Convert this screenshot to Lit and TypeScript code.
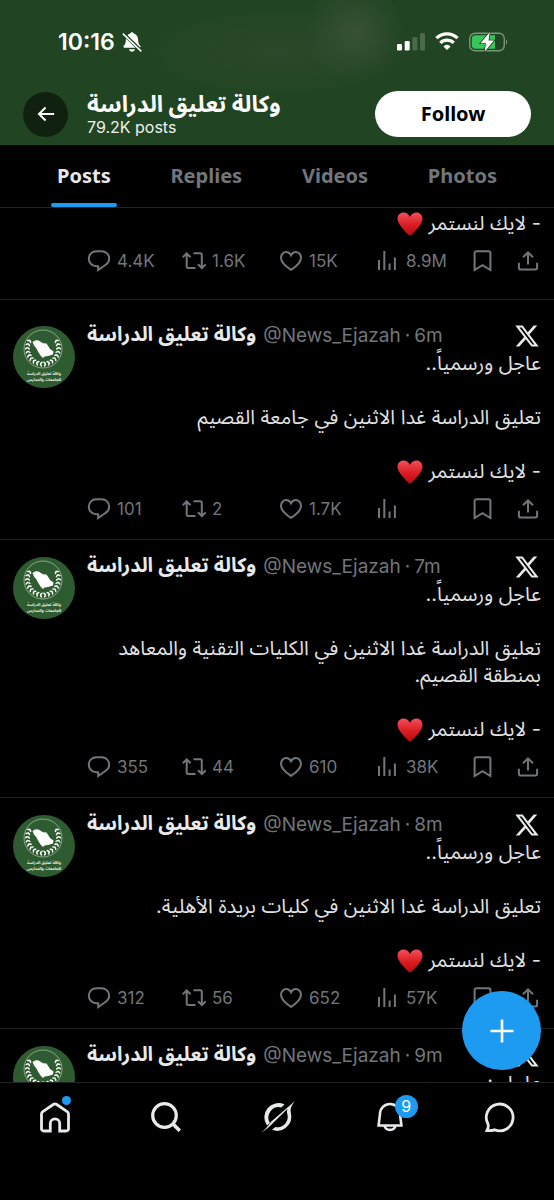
import { LitElement, html, css, svg, nothing } from "lit";
import { customElement, property } from "lit/decorators.js";

const NAME = "وكالة تعليق الدراسة";

const heart = html`<svg class="heart" viewBox="0 0 26 24" role="img" aria-label="♥">
  <defs>
    <linearGradient id="hg" x1="0" y1="0" x2="0" y2="1">
      <stop offset="0" stop-color="#f2505a" />
      <stop offset=".5" stop-color="#dc1f26" />
      <stop offset="1" stop-color="#b80a0d" />
    </linearGradient>
  </defs>
  <path
    fill="url(#hg)"
    d="M13 23.6C11.6 23.2 7.600 19 4.600 15.200C2 12 .5 9.500 .5 6.700C.5 3.100 3.200 .6 6.600 .6C9.300 .6 11.800 2.300 13 5C14.200 2.300 16.700 .6 19.400 .6C22.800 .6 25.500 3.100 25.500 6.700C25.500 9.500 24 12 21.400 15.200C18.400 19 14.400 23.200 13 23.600Z"
  />
</svg>`;

const icons = {
  reply: svg`<path d="M9.500 2.200h5C19 2.200 22.200 5.600 22.200 9.600c0 3-1.600 5.200-4.200 6.700l-6.800 4.700v-3.800H9.500C5 17.200 1.800 13.900 1.800 9.700S5 2.200 9.500 2.200Z"/>`,
  repost: svg`<path d="M.8 8.200 4.700 4.400l3.900 3.800M4.700 4.800V17.500a1.500 1.500 0 0 0 1.500 1.500H13.500M11.500 4.300H18.300a1.500 1.500 0 0 1 1.500 1.500V18.800M16 15.300l3.900 3.800 3.900-3.800"/>`,
  like: svg`<path d="M12 20.900C6.500 17.400 2 13.400 2 8.800c0-3.200 2.300-5.700 5.200-5.700 2 0 3.700 1.100 4.800 3.200 1.100-2.100 2.800-3.200 4.800-3.200 2.900 0 5.200 2.500 5.200 5.700 0 4.600-4.500 8.600-10 12.100Z"/>`,
  views: svg`<path d="M3 11v10M8.300 2v19M13.600 14.500v6.500M18.900 8.500v12.500"/>`,
  bookmark: svg`<path d="M3.600 4a1.800 1.800 0 0 1 1.800-1.800h12.200A1.800 1.800 0 0 1 19.400 4v17L11.500 16.200 3.600 21Z"/>`,
  share: svg`<path d="M11 15.500V3.500M6 8.300 11 3.300l5 5M1.900 13.800v4.900a1.800 1.800 0 0 0 1.800 1.800h14.600a1.800 1.800 0 0 0 1.800-1.800v-4.900"/>`,
};

const branch = [0, 1, 2, 3, 4, 5, 6, 7, 8];

@customElement("agency-avatar")
class AgencyAvatar extends LitElement {
  static styles = css`
    :host { display: block; }
    .pic { display: block; width: 100%; }
    .caption { font: 700 4px "Noto Sans Arabic", "DejaVu Sans", sans-serif; fill: #e9f1e7; text-anchor: middle; }
  `;

  leaf(i: number) {
    const deg = 212 - i * 14;
    const a = (deg * Math.PI) / 180;
    const x = 30 + Math.cos(a) * 15.500;
    const y = 22.500 + Math.sin(a) * 15.500;
    return svg`<g transform="translate(${x} ${y}) rotate(${deg})">
      <ellipse cx="-1.400" cy="0" rx="1.800" ry=".8" transform="rotate(38)"/>
      <ellipse cx="1.400" cy="0" rx="1.800" ry=".8" transform="rotate(-38)"/>
    </g>`;
  }

  render() {
    return html`<svg class="pic" viewBox="0 0 62 62" role="img" aria-label=${NAME}>
      <circle cx="31" cy="31" r="31" fill="#2f5b30" />
      <circle cx="30" cy="23" r="19" fill="none" stroke="#c8d8c6" stroke-width=".6" />
      <g fill="#fff">
        <g>${branch.map((i) => this.leaf(i))}</g>
        <g transform="translate(60 0) scale(-1 1)">${branch.map((i) => this.leaf(i))}</g>
        <path d="M19.500 16 22.500 14.200 25.500 14.600 30 17.200 33.500 17.400 35.500 20.500 37 23 40.500 25.500 40 28.500 35 30 31.500 30.600 30 32 27.500 29.500 25 25.500 23.500 22.500 21 19.500Z" />
      </g>
      <text class="caption" x="31" y="49">وكالة تعليق الدراسة</text>
      <text class="caption" x="31" y="55">للجامعات والمدارس</text>
    </svg>`;
  }
}

interface Post {
  age?: string;
  lines: string[];
  stats: string[];
  spaced?: boolean;
}

const OPEN = "عاجل ورسمياً..";

const posts: Post[] = [
  { lines: [], stats: ["4.4K", "1.6K", "15K", "8.9M"] },
  { age: "6m", lines: [OPEN, "", "تعليق الدراسة غدا الاثنين في جامعة القصيم", ""], stats: ["101", "2", "1.7K", ""], spaced: true },
  { age: "7m", lines: [OPEN, "", "تعليق الدراسة غدا الاثنين في الكليات التقنية والمعاهد بمنطقة القصيم.", ""], stats: ["355", "44", "610", "38K"] },
  { age: "8m", lines: [OPEN, "", "تعليق الدراسة غدا الاثنين في كليات بريدة الأهلية.", ""], stats: ["312", "56", "652", "57K"] },
  { age: "9m", lines: ["عاجل :"], stats: ["", "", "", ""] },
];

@customElement("feed-post")
class FeedPost extends LitElement {
  @property({ attribute: false }) post!: Post;

  static styles = css`
    :host { display: block; flex: none; }
    .post { display: grid; grid-template-columns: 62px minmax(0, 1fr); column-gap: 12px; padding: 14px 13px 18px; border-bottom: 1px solid #212327; }
    .spaced { padding-top: 23px; }
    .tail { padding-top: 2px; padding-bottom: 26px; }
    .avatar { margin-top: 3px; }
    .body { grid-column: 2; min-width: 0; }
    .head { display: flex; align-items: center; height: 25px; margin-bottom: 2px; white-space: nowrap; font: 19px/24px Inter, sans-serif; color: #71767b; }
    .name { margin-right: 7px; font: 700 20px/25px "Noto Sans Arabic", "DejaVu Sans", sans-serif; color: #e7e9ea; }
    .sep { margin: 0 4px; }
    .x { width: 26px; height: 26px; margin-left: auto; fill: #e7e9ea; }
    .text { margin: 0; font: 20px/27px Inter, "Noto Sans Arabic", "DejaVu Sans", sans-serif; color: #e0e1e2; }
    .line { min-height: 27px; }
    .close { display: flex; align-items: center; gap: 5px; height: 27px; }
    .heart { width: 26px; height: 24px; }
    .stats { display: grid; grid-template-columns: 95fr 97fr 97fr 95fr 46fr 24px; height: 24px; margin-top: 12px; }
    .stat { display: flex; align-items: center; gap: 6px; padding: 0; border: 0; background: none; color: #71767b; font: 17px/24px Inter, sans-serif; cursor: pointer; }
    .icon { flex: none; width: 24px; height: 24px; fill: none; stroke: currentColor; stroke-width: 2; }
  `;

  stat(icon: keyof typeof icons, label: string, value = "") {
    return html`<button class="stat" aria-label="${label} ${value}">
      <svg class="icon" viewBox="0 0 24 24">${icons[icon]}</svg>${value ? html`<span>${value}</span>` : nothing}
    </button>`;
  }

  render() {
    const { age, lines, stats, spaced } = this.post;
    return html`<article class="post ${spaced ? "spaced" : ""} ${age ? "" : "tail"}">
      ${age ? html`<agency-avatar class="avatar"></agency-avatar>` : nothing}
      <div class="body">
        ${age
          ? html`<header class="head">
              <bdi class="name">${NAME}</bdi><span>@News_Ejazah</span><span class="sep">·</span><span>${age}</span>
              <svg class="x" viewBox="1 0 24 24" aria-hidden="true">
                <path d="M18.244 2.250h3.308l-7.227 8.260 8.502 11.240H16.170l-5.214-6.817L4.990 21.750H1.680l7.730-8.835L1.254 2.250H8.080l4.713 6.231zm-1.161 17.520h1.833L7.084 4.126H5.117z" />
              </svg>
            </header>`
          : nothing}
        <div class="text" dir="rtl">
          ${lines.map((l) => html`<div class="line">${l}</div>`)}
          <div class="close"><span>- لايك لنستمر</span>${heart}</div>
        </div>
        <div class="stats">
          ${this.stat("reply", "Reply", stats[0])} ${this.stat("repost", "Repost", stats[1])}
          ${this.stat("like", "Like", stats[2])} ${this.stat("views", "Views", stats[3])}
          ${this.stat("bookmark", "Bookmark")} ${this.stat("share", "Share")}
        </div>
      </div>
    </article>`;
  }
}

@customElement("app-root")
class AppRoot extends LitElement {
  static styles = css`
    :host { display: flex; flex-direction: column; height: 100vh; background: #000; color: #e7e9ea; font-family: Inter, sans-serif; overflow: hidden; }
    .top { flex: none; background: radial-gradient(circle at 64% 22%, #375138 0, #37513800 50px), radial-gradient(ellipse at 50% 36%, #2c482a 0, #2c482a00 130px), #214522; }
    .status { display: flex; align-items: center; height: 83px; padding: 0 46px 0 58px; color: #fff; }
    .clock { font: 600 23px/28px Inter, sans-serif; }
    .mute { width: 20px; height: 22px; margin-left: 7px; }
    .signals { display: flex; align-items: center; gap: 10px; margin-left: auto; }
    .bars { width: 28px; height: 19px; }
    .wifi { width: 24px; height: 19px; }
    .battery { width: 39px; height: 20px; }
    .profile { display: flex; align-items: center; padding: 8px 23px; }
    .back { display: grid; place-items: center; width: 45px; height: 45px; padding: 0; border: 0; border-radius: 50%; background: #10220f; }
    .arrow { width: 18px; height: 18px; }
    .who { margin-left: 19px; }
    .title { margin: 0; font: 700 23px/26px Inter, "Noto Sans Arabic", "DejaVu Sans", sans-serif; color: #fff; white-space: nowrap; }
    .count { margin: 0; font: 16px/20px Inter, sans-serif; color: #eef2ee; }
    .follow { width: 156px; height: 46px; margin-left: auto; border: 0; border-radius: 23px; background: #fff; color: #000; font: 700 20px/24px "Noto Sans", sans-serif; }
    .tabs { flex: none; display: flex; justify-content: space-between; height: 62px; padding: 0 51px; border-bottom: 1px solid #212327; }
    .tab { position: relative; display: flex; align-items: center; padding: 0 6px; color: #71767b; text-decoration: none; font: 700 20px/24px "Noto Sans", sans-serif; }
    .on { color: #e7e9ea; }
    .on::after { content: ""; position: absolute; left: 0; right: 0; bottom: 0; height: 4px; border-radius: 2px; background: #1d9bf0; }
    .main { position: relative; flex: 1; min-height: 0; }
    .feed { height: 100%; overflow: hidden; }
    .fab { position: absolute; right: 13px; bottom: 12px; display: grid; place-items: center; width: 79px; height: 79px; padding: 0; border: 0; border-radius: 50%; background: #1d9bf0; }
    .plus { width: 24px; height: 24px; }
    .nav { flex: none; display: grid; grid-template-columns: repeat(5, 1fr); height: 117px; border-top: 1px solid #212327; }
    .item { display: grid; justify-content: center; align-content: start; padding-top: 18px; }
    .glyph { width: 32px; height: 32px; fill: none; stroke: #e7e9ea; stroke-width: 3; overflow: visible; }
    .holder { position: relative; display: block; height: 32px; }
    .dot { position: absolute; top: -5px; right: 0; width: 9px; height: 9px; border-radius: 50%; background: #1d9bf0; }
    .badge { position: absolute; top: -6px; right: -14px; width: 23px; height: 23px; border-radius: 50%; background: #1d9bf0; color: #fff; font: 16px/23px Inter, sans-serif; text-align: center; }
  `;

  navItem(label: string, glyph: unknown, extra: unknown = nothing) {
    return html`<a class="item" href="#${label}" aria-label=${label}>
      <span class="holder"><svg class="glyph" viewBox="0 0 32 32">${glyph}</svg>${extra}</span>
    </a>`;
  }

  render() {
    return html`
      <header class="top">
        <div class="status">
          <span class="clock">10:16</span>
          <svg class="mute" viewBox="0 0 20 22" fill="#fff">
            <path d="M10 1.200c.9 0 1.600.6 1.700 1.400 2.800.8 4.300 3 4.400 6 .1 3.600.8 4.900 2.100 6.200.8.9.4 2-.8 2H2.600c-1.200 0-1.600-1.100-.8-2C3.100 13.500 3.800 12.200 3.900 8.600c.1-3 1.600-5.200 4.400-6 .1-.8.800-1.400 1.700-1.400ZM7 18.200h6c-.3 1.500-1.500 2.500-3 2.500s-2.700-1-3-2.500Z" />
            <path d="M1.200 2.500 18.800 19.500" stroke="#214522" stroke-width="3.600" />
            <path d="M.8 2.600 19.300 20.400" stroke="#fff" stroke-width="1.500" />
          </svg>
          <span class="signals">
            <svg class="bars" viewBox="0 0 28 19" fill="#fff">
              <rect x="0" y="12" width="5" height="6.500" rx="1.300" />
              <rect x="7.700" y="9" width="5" height="9.500" rx="1.300" />
              <g fill="#4a6a4b"><rect x="15.400" y="5" width="5" height="13.500" rx="1.300" /><rect x="23" y="1" width="5" height="17.500" rx="1.300" /></g>
            </svg>
            <svg class="wifi" viewBox="0 0 24 19" fill="none" stroke="#fff" stroke-width="3.200">
              <path d="M1.400 6.200a15 15 0 0 1 21.200 0M5.300 10.800a9.600 9.600 0 0 1 13.400 0" />
              <path d="M12 18 8.400 14.400a5 5 0 0 1 7.200 0Z" fill="#fff" stroke="none" />
            </svg>
            <svg class="battery" viewBox="0 0 39 20">
              <rect x=".7" y="1.200" width="34.600" height="17.600" rx="5.500" fill="none" stroke="#7d947d" stroke-width="1.400" />
              <path d="M37 7.500c1.500.6 1.500 4.400 0 5Z" fill="#7d947d" />
              <path d="M6.500 3.200H26v13.600H6.500a3.700 3.700 0 0 1-3.700-3.700V6.900a3.700 3.700 0 0 1 3.700-3.700Z" fill="#35c759" />
              <path d="M20.800 0 11.500 11.200h5.500L15.600 19.800 25 8.600h-5.500Z" fill="#fff" stroke="#214522" stroke-width="1.600" paint-order="stroke" />
            </svg>
          </span>
        </div>
        <div class="profile">
          <button class="back" aria-label="Back">
            <svg class="arrow" viewBox="0 0 20 20" fill="none" stroke="#fff" stroke-width="2.200"><path d="M19 10H2.500M9.500 2.700 2.200 10l7.300 7.300" /></svg>
          </button>
          <div class="who">
            <h1 class="title"><bdi>${NAME}</bdi></h1>
            <p class="count">79.2K posts</p>
          </div>
          <button class="follow">Follow</button>
        </div>
      </header>
      <nav class="tabs">
        <a class="tab on" href="#posts">Posts</a>
        <a class="tab" href="#replies">Replies</a>
        <a class="tab" href="#videos">Videos</a>
        <a class="tab" href="#photos">Photos</a>
      </nav>
      <main class="main">
        <div class="feed">${posts.map((p) => html`<feed-post .post=${p}></feed-post>`)}</div>
        <button class="fab" aria-label="New post">
          <svg class="plus" viewBox="0 0 24 24" stroke="#fff" stroke-width="2.600"><path d="M12 .5v23M.5 12h23" /></svg>
        </button>
      </main>
      <nav class="nav">
        ${this.navItem(
          "home",
          svg`<path stroke-width="2.800" d="M4.800 30A2.300 2.300 0 0 1 2.500 27.700V13.200a3 3 0 0 1 1.300-2.500L14.300 3.500a3 3 0 0 1 3.400 0l10.500 7.200a3 3 0 0 1 1.300 2.500v14.500a2.300 2.300 0 0 1-2.300 2.300H20.700V22.500a4.700 4.700 0 0 0-9.400 0V30Z"/>`,
          html`<span class="dot"></span>`
        )}
        ${this.navItem("search", svg`<circle cx="14.500" cy="14.500" r="11.800" stroke-width="3.200"/><path stroke-width="3.600" d="m22.800 22.800 7 7"/>`)}
        ${this.navItem(
          "grok",
          svg`<g fill="#e7e9ea" stroke="none" transform="translate(1 0)"><path d="M22.500 3.400A14.200 14.200 0 0 0 5 24.600l2.900-2.600A10.400 10.400 0 0 1 19.300 6.500Z"/><path d="M-1 32C4 28 6 25 9.300 20.600L33 0C29 5 28 8 29 12.500A14.200 14.200 0 0 1 10 28.800l3.400-2.700A10.400 10.400 0 0 0 25.200 12.500c-.3-1.600-.3-2.600.2-4.500L11.500 21.500C8 25 4 29-1 32Z"/></g>`
        )}
        ${this.navItem(
          "notifications",
          svg`<path transform="translate(2 0)" stroke-width="2.600" d="M4.600 24.500 6 13a10 10 0 0 1 20 0l1.400 11.500ZM10.300 24.500a5.900 5.900 0 0 0 11.400 0"/>`,
          html`<span class="badge">9</span>`
        )}
        ${this.navItem("messages", svg`<path transform="translate(1 0)" stroke-width="2.800" d="M3 29.500C4.200 27.700 4.600 25.800 4 23A13.400 13.400 0 1 1 10.500 28.800C8 29.600 6 29.900 3 29.500Z"/>`)}
      </nav>
    `;
  }
}
